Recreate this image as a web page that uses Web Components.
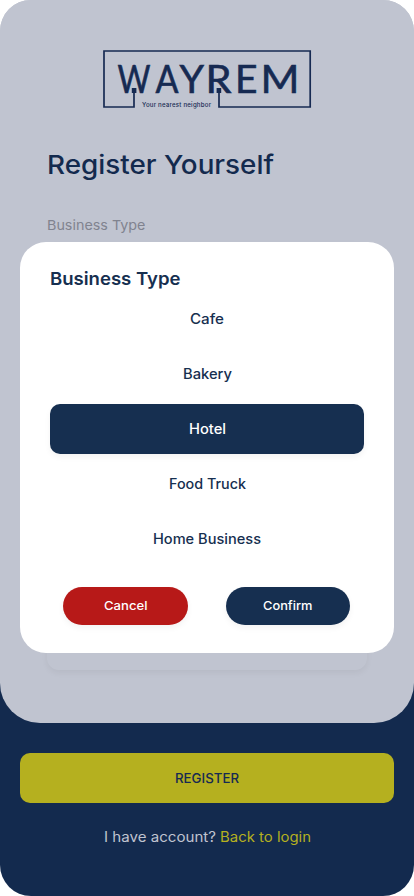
<!DOCTYPE html>
<html lang="en">
<head>
<meta charset="utf-8">
<title>Wayrem – Register</title>
<style>
html,body{margin:0;background:#fff;font-family:Inter,"Open Sans",sans-serif}
</style>
</head>
<body>
<register-screen></register-screen>
<script>
const define = (name, html, setup) => {
  const tpl = document.createElement('template');
  tpl.innerHTML = html;
  customElements.define(name, class extends HTMLElement {
    constructor() {
      super();
      this.attachShadow({ mode: 'open' }).append(tpl.content.cloneNode(true));
    }
    connectedCallback() { if (setup) setup(this); }
  });
};

// Inline text whose letterforms are widened to span the given width.
define('fit-text', `<style>
:host{display:inline-block;white-space:pre}
span{display:inline-block;transform-origin:0 50%}
</style><span><slot></slot></span>`, el => {
  const span = el.shadowRoot.querySelector('span');
  const target = parseFloat(el.getAttribute('width'));
  const scale = target / span.getBoundingClientRect().width;
  span.style.transform = 'scaleX(' + scale + ')';
  el.style.width = target + 'px';
});

define('wayrem-logo', `<style>
:host{display:block;width:210px;height:60px}
svg{display:block}
text{fill:#162a52}
.name{font-family:Lato,sans-serif;font-size:38.5px;font-weight:400;stroke:#162a52;stroke-width:.6px}
.tag{font-family:Inter,sans-serif;font-size:6.1px;font-weight:500}
</style>
<svg width="210" height="60" viewBox="102 49 210 60">
<path d="M134 92V107H104V51H310.2V107H219V92" fill="none" stroke="#162a52" stroke-width="1.7"/>
<path d="M131.8 88h4.6v5h-4.6zM216.6 88h4.6v5h-4.6z" fill="#162a52"/>
<text class="name" y="93"><tspan x="117.500" textLength="33" lengthAdjust="spacingAndGlyphs">W</tspan><tspan x="155.500" textLength="23" lengthAdjust="spacingAndGlyphs">A</tspan><tspan x="179.500" textLength="24.500" lengthAdjust="spacingAndGlyphs">Y</tspan><tspan x="205.500" textLength="26" lengthAdjust="spacingAndGlyphs">R</tspan><tspan x="235" textLength="22.500" lengthAdjust="spacingAndGlyphs">E</tspan><tspan x="260.500" textLength="39" lengthAdjust="spacingAndGlyphs">M</tspan></text>
<text class="tag" x="142" y="107" textLength="69">Your nearest neighbor</text>
</svg>`);

define('option-row', `<style>
:host{display:flex;box-sizing:border-box;align-items:center;justify-content:center;height:50px;padding-bottom:2px;border-radius:10px;font-size:14px;font-weight:500;color:#162f50}
:host([selected]){background:#162f50;color:#fff;box-shadow:0 3px 6px #0000000d}
</style><slot></slot>`);

define('pill-button', `<style>
:host{display:flex;box-sizing:border-box;align-items:center;justify-content:center;width:124.500px;height:38px;padding-bottom:1px;border-radius:19px;background:#162f50;color:#fff;font-size:12.300px;font-weight:500;box-shadow:0 3px 6px #0000000d}
:host([danger]){background:#b71918}
</style><slot></slot>`);

define('type-dialog', `<style>
:host{display:block;box-sizing:border-box;width:374px;height:411px;padding:25px 30px 0;border-radius:26px;background:#fff;color:#162f50}
h2{margin:0;font-size:17.8px;line-height:24px;font-weight:600}
.list{display:grid;gap:5px;margin-top:3px}
.actions{display:flex;justify-content:space-between;padding:0 14px 0 13px;margin-top:23px}
</style>
<h2><fit-text width="130.5">Business Type</fit-text></h2>
<div class="list">
<option-row><fit-text width="34">Cafe</fit-text></option-row>
<option-row><fit-text width="49">Bakery</fit-text></option-row>
<option-row selected><fit-text width="37">Hotel</fit-text></option-row>
<option-row><fit-text width="77">Food Truck</fit-text></option-row>
<option-row><fit-text width="108">Home Business</fit-text></option-row>
</div>
<div class="actions"><pill-button danger><fit-text width="43.500">Cancel</fit-text></pill-button><pill-button><fit-text width="49.500">Confirm</fit-text></pill-button></div>`);

define('register-screen', `<style>
:host{display:flex;flex-direction:column;position:relative;width:414px;height:896px;border-radius:31px;overflow:hidden;background:linear-gradient(#c0c4d0 0 400px,#132a4e 400px)}
.panel{display:flex;flex-direction:column;box-sizing:border-box;height:723px;padding:49px 47px 53px;border-radius:0 0 40px 40px;background:#c0c4d0}
wayrem-logo{margin-left:55px}
h1{margin:37px 0 0;font-size:26.200px;line-height:38px;font-weight:500;color:#132a4e}
label{margin-top:31px;font-size:13.6px;line-height:20px;color:#80838f;font-weight:400}
.field{flex:1;margin-top:7px;border-radius:12px;box-shadow:0 3px 6px #0000000d}
footer{display:flex;flex-direction:column;align-items:center;padding:30px 20px 0}
.register{align-self:stretch;height:50px;border:0;border-radius:10px;background:#b5b01f;color:#162a52;font:500 13.7px Inter,sans-serif;padding:0}
p{display:flex;gap:4px;margin:24px 0 0;font-size:14px;line-height:20px;color:#c0c4d0}
a{color:#b5b01f}
type-dialog{position:absolute;left:20px;top:242px}
</style>
<div class="panel">
<wayrem-logo></wayrem-logo>
<h1><fit-text width="227">Register Yourself</fit-text></h1>
<label><fit-text width="98.500">Business Type</fit-text></label>
<div class="field"></div>
</div>
<footer>
<button class="register"><fit-text width="64">REGISTER</fit-text></button>
<p><fit-text width="112">I have account?</fit-text><a><fit-text width="91">Back to login</fit-text></a></p>
</footer>
<type-dialog></type-dialog>`);
</script>
</body>
</html>
